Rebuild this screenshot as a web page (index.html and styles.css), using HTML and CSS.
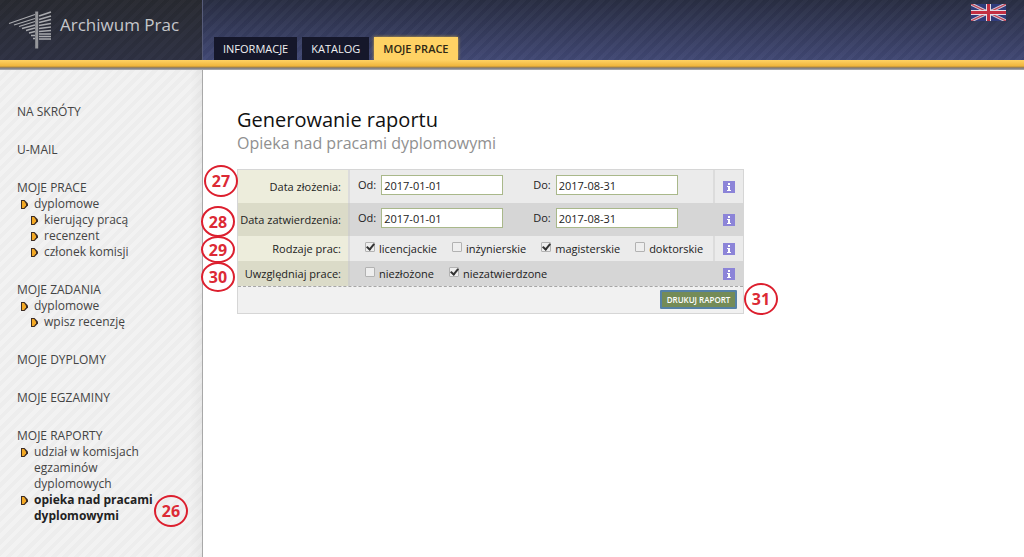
FILE: index.html
```html
<!DOCTYPE html>
<html lang="pl">
<head>
<meta charset="utf-8">
<title>Archiwum Prac</title>
<link rel="stylesheet" href="styles.css">
</head>
<body>
<svg class="defs" width="0" height="0" aria-hidden="true">
  <symbol id="info" viewBox="0 0 12 12"><rect width="12" height="12" fill="#8c84d8"/><path d="M5 2h2v2H5zM4 5h3v4h1v1H4V9h1V6H4z" fill="#fff"/></symbol>
</svg>
<header class="header">
  <div class="brand">
    <svg class="logo" width="44" height="40" viewBox="0 0 44 40" aria-hidden="true">
      <g stroke="#a9aaae" stroke-width="1.3" fill="none">
        <path d="M1 12.500L27 3.500M6 14L27 7.500M11 15.500L27 10.500M14 17.500L27 14M18 19.500L27 17M21 22L27 20.500M23 24.500H27M25 27.500H27"/>
        <path d="M31 5L43 1M31 8.500L43 5M31 11.500L43 8.500M31 14.500L43 12.500M31 17.500L43 16M31 20.500L43 19.500M31 23H43M31 25.500H43M31 28H43" stroke-width="1.600"/>
      </g>
      <path d="M27.200 0.500h3v37h-3z" fill="#96979b"/>
    </svg>
    <span class="brand-name">Archiwum Prac</span>
  </div>
  <nav class="tabs">
    <a class="tab" href="#">INFORMACJE</a>
    <a class="tab" href="#">KATALOG</a>
    <a class="tab tab-active" href="#">MOJE PRACE</a>
  </nav>
  <a class="lang" href="#" aria-label="English">
    <svg width="35" height="17" viewBox="0 0 35 17" aria-hidden="true">
      <rect width="35" height="17" fill="#303c7c"/>
      <path d="M0 0L35 17M35 0L0 17" stroke="#cfcbd8" stroke-width="3.2"/>
      <path d="M0 0L35 17M35 0L0 17" stroke="#c04456" stroke-width="1.2"/>
      <path d="M17.500 0V17M0 8.500H35" stroke="#e2dde6" stroke-width="5"/>
      <path d="M17.500 0V17M0 8.500H35" stroke="#c22f42" stroke-width="3"/>
    </svg>
  </a>
</header>
<div class="gold"></div>
<div class="body">
  <nav class="sidebar">
    <section><a class="head" href="#">NA SKRÓTY</a></section>
    <section><a class="head" href="#">U-MAIL</a></section>
    <section><a class="head" href="#">MOJE PRACE</a>
      <a class="item" href="#">dyplomowe</a>
      <a class="item sub" href="#">kierujący pracą</a>
      <a class="item sub" href="#">recenzent</a>
      <a class="item sub" href="#">członek komisji</a></section>
    <section><a class="head" href="#">MOJE ZADANIA</a>
      <a class="item" href="#">dyplomowe</a>
      <a class="item sub" href="#">wpisz recenzję</a></section>
    <section><a class="head" href="#">MOJE DYPLOMY</a></section>
    <section><a class="head" href="#">MOJE EGZAMINY</a></section>
    <section><a class="head" href="#">MOJE RAPORTY</a>
      <a class="item" href="#">udział w komisjach<br>egzaminów<br>dyplomowych</a>
      <a class="item current" href="#">opieka nad pracami<br>dyplomowymi</a></section>
  </nav>
  <main class="main">
    <h1>Generowanie raportu</h1>
    <h2>Opieka nad pracami dyplomowymi</h2>
    <form class="form">
      <table>
        <tr class="tall">
          <th>Data złożenia:</th>
          <td><div class="dates">
            <label>Od: <input type="text" value="2017-01-01"></label>
            <label>Do: <input type="text" value="2017-08-31"></label></div></td>
          <td class="info"><svg width="12" height="12"><use href="#info"/></svg></td>
        </tr>
        <tr class="tall dark">
          <th>Data zatwierdzenia:</th>
          <td><div class="dates">
            <label>Od: <input type="text" value="2017-01-01"></label>
            <label>Do: <input type="text" value="2017-08-31"></label></div></td>
          <td class="info"><svg width="12" height="12"><use href="#info"/></svg></td>
        </tr>
        <tr>
          <th>Rodzaje prac:</th>
          <td><div class="checks">
            <label><input type="checkbox" checked>licencjackie</label>
            <label><input type="checkbox">inżynierskie</label>
            <label><input type="checkbox" checked>magisterskie</label>
            <label><input type="checkbox">doktorskie</label></div></td>
          <td class="info"><svg width="12" height="12"><use href="#info"/></svg></td>
        </tr>
        <tr class="dark">
          <th>Uwzględniaj prace:</th>
          <td><div class="checks">
            <label><input type="checkbox">niezłożone</label>
            <label><input type="checkbox" checked>niezatwierdzone</label></div></td>
          <td class="info"><svg width="12" height="12"><use href="#info"/></svg></td>
        </tr>
      </table>
      <div class="actions"><button type="button">DRUKUJ RAPORT</button></div>
    </form>
  </main>
</div>
<span class="note n26">26</span>
<span class="note n27">27</span>
<span class="note n28">28</span>
<span class="note n29">29</span>
<span class="note n30">30</span>
<span class="note n31">31</span>
</body>
</html>
```
FILE: styles.css
```css
*, *::before, *::after { box-sizing: border-box; }
body {
  margin: 0;
  min-height: 100vh;
  display: flex;
  flex-direction: column;
  position: relative;
  background: #fff;
  color: #222;
  font: 12px/16px "Open Sans", "Noto Sans", sans-serif;
}
a { color: inherit; text-decoration: none; }
.defs { position: absolute; }

.header {
  display: flex;
  height: 60px;
  background:
    repeating-linear-gradient(135deg, rgba(255,255,255,.02) 0 4px, rgba(0,0,0,.03) 4px 8px),
    linear-gradient(#292e43, #414874);
}
.brand {
  display: flex;
  align-items: flex-start;
  gap: 8px;
  width: 203px;
  padding: 11px 0 0 8px;
  border-right: 1px solid #565b78;
  background:
    repeating-linear-gradient(135deg, rgba(255,255,255,.01) 0 4px, rgba(0,0,0,.05) 4px 8px),
    linear-gradient(#292b32, #2f3244);
}
.brand-name { color: #c5c6ca; font-size: 17px; line-height: 28px; white-space: nowrap; }
.tabs { display: flex; align-items: flex-end; gap: 5px; padding-left: 11px; }
.tab {
  height: 23px;
  padding: 0 9px;
  background: #15172a;
  color: #f0f0f2;
  font-size: 11px;
  line-height: 24px;
}
.tab-active {
  background: #ffd264;
  color: #2e2815;
  font-weight: 600;
  box-shadow: 0 0 3px #c8a54a;
}
.lang { margin: 4px 18px 0 auto; height: 17px; }
.lang svg { display: block; }
.gold {
  position: relative;
  height: 10px;
  background: linear-gradient(#ffd264, #efb53c 6px, #b98d3c 7px, #77757a 8px, #b0b0b4);
}

.body { display: flex; flex: 1; }
.sidebar {
  display: flex;
  flex-direction: column;
  gap: 21px;
  width: 203px;
  padding: 33px 0 20px 17px;
  border-right: 1px solid #a8a8a8;
  background:
    linear-gradient(90deg, transparent 190px, rgba(0,0,0,.04)),
    repeating-linear-gradient(135deg, #f2f2f2 0 4px, #ededed 4px 8px);
  color: #444;
}
.head { display: block; line-height: 17px; }
.item { display: block; position: relative; padding-left: 17px; }
.sub { margin-left: 10px; }
.item::before, .item::after {
  content: "";
  position: absolute;
  left: 4px;
  top: 4px;
  width: 7px;
  height: 9px;
  background: #3c2c24;
  clip-path: polygon(0 0, 50% 0, 100% 40%, 100% 60%, 50% 100%, 0 100%);
}
.item::after {
  left: 5px;
  top: 5px;
  width: 4px;
  height: 7px;
  background: #f3a925;
}
.current { color: #222; font-weight: 700; }

.main { flex: 1; padding: 36px 34px; }
h1 { margin: 0; color: #111; font-size: 20px; line-height: 27px; font-weight: 400; }
h2 { margin: 0 0 16px; color: #909090; font-size: 16px; line-height: 20px; font-weight: 400; }
.form { width: 507px; border: 1px solid #d6d6d6; background: #f1f1f1; font-size: 11px; }
table { width: 100%; border-collapse: separate; border-spacing: 0; table-layout: fixed; }
tr { height: 25px; background: #ebebeb; }
.tall { height: 33px; }
.dark { background: #d6d6d6; }
th, td { padding: 0; }
th {
  width: 112px;
  padding-right: 7px;
  border-right: 2px solid #dcdcdc;
  background: #ededdc;
  font-weight: 400;
  text-align: right;
  white-space: nowrap;
}
.dark th { background: #dbdbc8; border-color: #d0d0cc; }
.info { width: 30px; border-left: 2px solid #dcdcdc; text-align: center; }
.dark .info { border-color: #d6d6d6; }
.info svg { display: block; margin: 0 auto; }
.dates { display: flex; gap: 30px; padding: 0 0 3px 8px; }
.dates label { display: flex; align-items: center; gap: 5px; }
.dates input {
  width: 122px;
  height: 20px;
  padding: 0 2px;
  border: 1px solid #a9b88a;
  background: #fff;
  color: #222;
  font: inherit;
}
.checks { display: flex; gap: 15px; padding-left: 15px; }
.checks label { display: flex; align-items: center; gap: 4px; }
.checks input {
  appearance: none;
  position: relative;
  width: 10px;
  height: 10px;
  margin: 0 0 3px;
  border: 1px solid #b2b2b2;
  border-radius: 1px;
  background: #eee;
}
.checks input:checked::after {
  content: "";
  position: absolute;
  left: 2px;
  top: -1px;
  width: 5px;
  height: 8px;
  border: solid #333;
  border-width: 0 2px 2px 0;
  transform: rotate(40deg);
}
.actions {
  display: flex;
  justify-content: flex-end;
  padding: 3px 6px 4px;
  border-top: 1px dashed #a6a6a6;
}
button {
  width: 77px;
  height: 19px;
  padding: 0;
  border: 2px solid #5581a5;
  border-radius: 1px;
  background: #748b57;
  color: #fff;
  font: 600 8px/14px "Open Sans", sans-serif;
  white-space: nowrap;
}

.note {
  position: absolute;
  display: flex;
  align-items: center;
  justify-content: center;
  width: 34px;
  height: 32px;
  border: 2px solid #dc1f2e;
  border-radius: 50%;
  color: #dc2a35;
  font-size: 16px;
  font-weight: 700;
}
.n26 { left: 154px; top: 495px; }
.n27 { left: 204px; top: 165px; }
.n28 { left: 201px; top: 206px; height: 31px; }
.n29 { left: 201px; top: 236px; height: 27px; }
.n30 { left: 201px; top: 262px; height: 30px; }
.n31 { left: 744px; top: 283px; }
```
